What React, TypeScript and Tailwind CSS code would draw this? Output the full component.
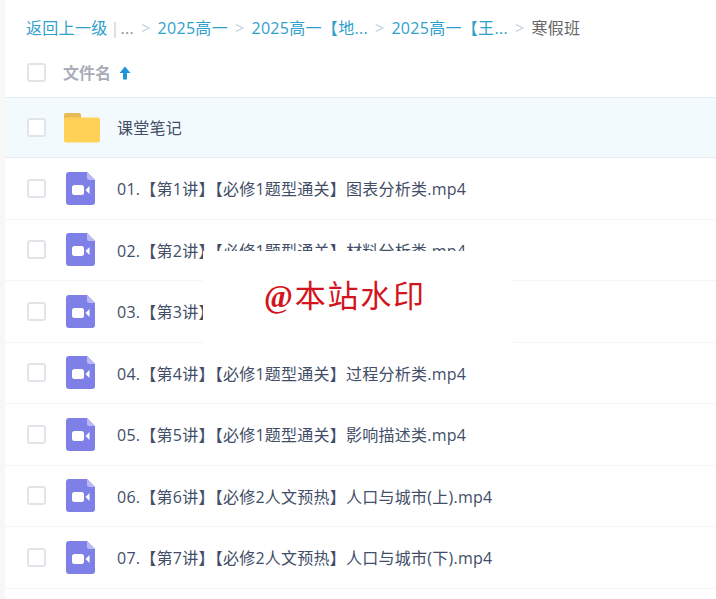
const files = [
  "01.【第1讲】【必修1题型通关】图表分析类.mp4",
  "02.【第2讲】【必修1题型通关】材料分析类.mp4",
  "03.【第3讲】【必修1题型通关】原理分析类.mp4",
  "04.【第4讲】【必修1题型通关】过程分析类.mp4",
  "05.【第5讲】【必修1题型通关】影响描述类.mp4",
  "06.【第6讲】【必修2人文预热】人口与城市(上).mp4",
  "07.【第7讲】【必修2人文预热】人口与城市(下).mp4",
];

function Check() {
  return <span className="block w-[19px] h-[19px] rounded-[3px] border-2 border-[#e1e4e8] bg-white shrink-0" />;
}

function VideoIcon() {
  return (
    <svg width="29" height="33" viewBox="0 0 29 33" className="block">
      <path d="M3 0H21L29 8V30a3 3 0 0 1-3 3H3a3 3 0 0 1-3-3V3a3 3 0 0 1 3-3Z" fill="#7f7fe8" />
      <path d="M21 0L29 8H23a2 2 0 0 1-2-2Z" fill="#b9b9f3" />
      <rect x="6" y="13" width="12" height="10" rx="2.500" fill="#fff" />
      <path d="M19.500 18L23.500 14V22Z" fill="#fff" />
    </svg>
  );
}

function FolderIcon() {
  return (
    <svg width="36" height="30" viewBox="0 0 36 30" className="block">
      <path d="M2 0H15a2 2 0 0 1 2 2V6H0V2a2 2 0 0 1 2-2Z" fill="#e6bb55" />
      <path d="M2 4.500H34a2 2 0 0 1 2 2V27.500a2 2 0 0 1-2 2H2a2 2 0 0 1-2-2V6.500a2 2 0 0 1 2-2Z" fill="#ffd257" />
    </svg>
  );
}

function Sep() {
  return <span className="text-[#c5d0d8] mx-[7px] text-[16px]">&gt;</span>;
}

function Row({ name, first }: { name: string; first?: boolean }) {
  return (
    <div className={first
      ? "flex items-center h-[61px] pl-[22px] border-b border-t bg-[#f3fafd] border-[#e3edf2]"
      : "flex items-center h-[61.5px] pl-[22px] border-b border-[#f3f5f6]"}>
      <Check />
      <span className={first ? "flex justify-center w-[36px] ml-[18px]" : "flex justify-center w-[36px] ml-[16px]"}>
        {first ? <FolderIcon /> : <VideoIcon />}
      </span>
      <span className={first
        ? "ml-[17px] text-[16px] tracking-[0.25px] text-[#424e67] whitespace-nowrap"
        : "ml-[19px] mt-[2px] text-[16px] tracking-[0.25px] text-[#424e67] whitespace-nowrap"}>{name}</span>
    </div>
  );
}

export default function App() {
  return (
    <div
      className="relative w-[716px] h-[599px] overflow-hidden bg-white pl-[5px]"
      style={{ fontFamily: '"Open Sans","Noto Sans CJK SC",sans-serif' }}
    >
      <div className="absolute left-0 top-0 bottom-0 w-[5px] bg-[#f7f7f8]" />
      <div className="flex items-center h-[59px] pl-[21px] pb-[3px] text-[16px] tracking-[0.3px] whitespace-nowrap">
        <span className="text-[#2f9fcb]">返回上一级</span>
        <span className="text-[#c8ced3] ml-[3px] mr-[1px]">|</span>
        <span className="text-[#8a9199]">...</span>
        <Sep />
        <span className="text-[#2f9fcb]">2025高一</span>
        <Sep />
        <span className="text-[#2f9fcb]">2025高一【地...</span>
        <Sep />
        <span className="text-[#2f9fcb]">2025高一【王...</span>
        <Sep />
        <span className="text-[#666]">寒假班</span>
      </div>
      <div className="flex items-center h-[38px] pl-[22px] pb-[11px]">
        <Check />
        <span className="ml-[17px] text-[16px] font-bold text-[#a8adb8]">文件名</span>
        <svg width="12" height="14" viewBox="0 0 12 14" className="ml-[8px]">
          <path d="M6 0.500L11.500 7H8V13.500H4V7H0.500Z" fill="#2193d6" />
        </svg>
      </div>
      <Row name="课堂笔记" first />
      {files.map((f) => (
        <Row key={f} name={f} />
      ))}
      <div className="absolute left-[203px] top-[251px] w-[310px] h-[94px] bg-white flex">
        <span
          className="mt-[28px] ml-[61px] text-[31px] leading-[36px] text-[#d3141c] tracking-[1.8px] whitespace-nowrap"
          style={{ fontFamily: '"Liberation Serif","Noto Sans CJK SC",serif' }}
        >
          <span className="font-bold">@</span>本站水印
        </span>
      </div>
    </div>
  );
}
